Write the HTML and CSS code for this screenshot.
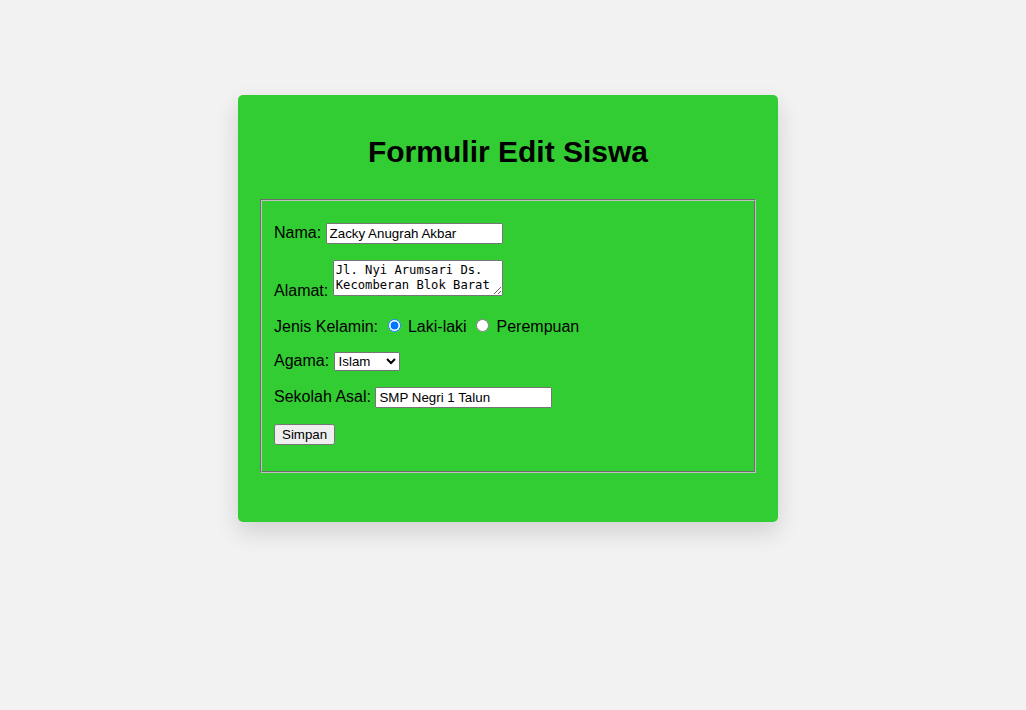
FILE: index.html
```html
<!DOCTYPE html>
<html lang="id">
<head>
<meta charset="utf-8">
<title>Formulir Edit Siswa</title>
<link rel="stylesheet" href="styles.css">
</head>
<body>
<div class="card">
  <h1 class="title">Formulir Edit Siswa</h1>
  <form class="form">
    <fieldset class="box">
      <p class="row"><label for="nama">Nama:</label> <input class="field" type="text" id="nama" value="Zacky Anugrah Akbar"></p>
      <p class="row"><label for="alamat">Alamat:</label> <textarea class="area" id="alamat">Jl. Nyi Arumsari Ds. Kecomberan Blok Barat</textarea></p>
      <p class="row"><label>Jenis Kelamin:</label> <label class="opt"><input class="radio" type="radio" name="jk" checked> Laki-laki</label> <label class="opt"><input class="radio" type="radio" name="jk"> Perempuan</label></p>
      <p class="row"><label for="agama">Agama:</label> <select class="pick" id="agama"><option>Islam</option><option>Kristen</option><option>Hindu</option><option>Budha</option></select></p>
      <p class="row"><label for="sekolah">Sekolah Asal:</label> <input class="field" type="text" id="sekolah" value="SMP Negri 1 Talun"></p>
      <p class="row"><button class="btn" type="button">Simpan</button></p>
    </fieldset>
  </form>
</div>
</body>
</html>
```
FILE: styles.css
```css
html, body {
  margin: 0;
  padding: 0;
}
body {
  background: #f2f2f2;
  font-family: "Liberation Sans", Arial, sans-serif;
  font-size: 16px;
  color: #000;
  min-height: 100vh;
  overflow: hidden;
}
.card {
  width: 500px;
  margin: 95px 0 0 238px;
  padding: 38px 20px 49px;
  background: #32cd32;
  border-radius: 5px;
  box-shadow: 0 10px 25px rgba(0, 0, 0, 0.14);
}
.title {
  margin: 0 0 29px;
  font-size: 30px;
  line-height: 37px;
  font-weight: bold;
  text-align: center;
}
.form {
  margin: 0;
}
.box {
  margin: 0 2px;
  padding: 5.6px 12px 10px;
  border: 2px groove #c0c0c0;
}
.row {
  margin: 16px 0;
}
.field {
  font-family: "Liberation Sans", Arial, sans-serif;
  font-size: 13.333px;
  width: 177px;
  height: 21px;
  box-sizing: border-box;
  padding: 1px 2px;
  margin: 0;
}
.area {
  font-family: "DejaVu Sans Mono", "Liberation Mono", monospace;
  font-size: 12.2px;
  line-height: 15px;
  width: 170px;
  height: 36px;
  box-sizing: border-box;
  padding: 2px;
  margin: 0;
  vertical-align: baseline;
}
.radio {
  margin: 3px 3px 0 5px;
}
.pick {
  font-family: "Liberation Sans", Arial, sans-serif;
  font-size: 13.333px;
  width: 66px;
  height: 19px;
  margin: 0;
}
.btn {
  font-family: "Liberation Sans", Arial, sans-serif;
  font-size: 13.333px;
  width: 61px;
  height: 21px;
  margin: 0;
  padding: 1px 6px;
}
```
